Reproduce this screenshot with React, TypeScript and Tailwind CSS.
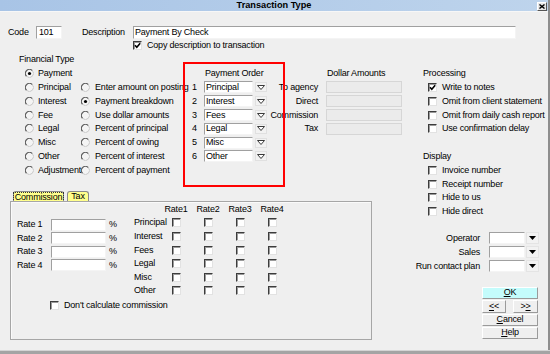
import React from "react";

const Row = ({ className = "", children }: { className?: string; children?: React.ReactNode }) => (
  <div className={"flex h-[13.8px] items-center whitespace-nowrap " + className}>{children}</div>
);

const Radio = ({ checked = false }: { checked?: boolean }) => (
  <svg width="9" height="9" viewBox="0 0 9 9" className="shrink-0">
    <circle cx="4.5" cy="4.5" r="4" fill="#f4f4f4" />
    <path d="M7.3 1.6 A4 4 0 0 0 1.6 7.3" stroke="#5e5e5e" strokeWidth="1.3" fill="none" />
    <path d="M1.6 7.3 A4 4 0 0 0 7.3 1.6" stroke="#c8c8c8" strokeWidth="1" fill="none" />
    {checked && <circle cx="4.5" cy="4.5" r="1.6" fill="#000" />}
  </svg>
);

const Check = ({ checked = false }: { checked?: boolean }) => (
  <div className="w-[9px] h-[9px] shrink-0 bg-white border border-t-[#3c3c3c] border-l-[#3c3c3c] border-b-[#e2e2e2] border-r-[#e2e2e2] shadow-[inset_1px_1px_0_#9a9a9a] flex items-center justify-center">
    {checked && (
      <svg width="7" height="7" viewBox="0 0 7 7">
        <path d="M1 3.2 L2.8 5.3 L6.2 1.2" stroke="#000" strokeWidth="1.6" fill="none" />
      </svg>
    )}
  </div>
);

const Field = ({ className = "", children }: { className?: string; children?: React.ReactNode }) => (
  <div className={"flex items-center bg-white border border-t-[#a0a0a0] border-l-[#a0a0a0] border-b-[#f4f4f4] border-r-[#f4f4f4] " + className}>
    {children}
  </div>
);

const HollowArrow = () => (
  <div className="w-[12px] h-[10px] ml-[2px] bg-[#f2f2f2] border border-[#e0e0e0] flex items-center justify-center">
    <svg width="8" height="5" viewBox="0 0 8 5">
      <path d="M0.5 0.5 H7.5 L4 4.5 Z" fill="#fff" stroke="#3a3a3a" strokeWidth="1" />
    </svg>
  </div>
);

const SolidArrow = () => (
  <div className="w-[13px] h-[12px] ml-[1px] bg-[#f2f2f2] border border-[#e4e4e4] flex items-center justify-center">
    <svg width="7" height="4" viewBox="0 0 7 4">
      <path d="M0 0 H7 L3.5 4 Z" fill="#000" />
    </svg>
  </div>
);

const Btn = ({ className = "", children }: { className?: string; children?: React.ReactNode }) => (
  <div className={"flex items-center justify-center border border-t-white border-l-white border-b-[#9a9a9a] border-r-[#9a9a9a] " + className}>
    {children}
  </div>
);

const finCol1 = ["Payment", "Principal", "Interest", "Fee", "Legal", "Misc", "Other", "Adjustment"];
const finCol2 = [
  "Enter amount on posting",
  "Payment breakdown",
  "Use dollar amounts",
  "Percent of principal",
  "Percent of owing",
  "Percent of interest",
  "Percent of payment",
];
const payOrder = ["Principal", "Interest", "Fees", "Legal", "Misc", "Other"];
const dollars = ["To agency", "Direct", "Commission", "Tax"];
const processing = [
  ["Write to notes", true],
  ["Omit from client statement", false],
  ["Omit from daily cash report", false],
  ["Use confirmation delay", false],
] as const;
const display = ["Invoice number", "Receipt number", "Hide to us", "Hide direct"];
const rateKinds = ["Principal", "Interest", "Fees", "Legal", "Misc", "Other"];

export default function App() {
  return (
    <div className="relative w-[550px] h-[354px] overflow-hidden bg-[#efefef] text-[9px] tracking-[-0.2px] leading-none text-black font-['Liberation_Sans',Arial,sans-serif] flex flex-col">
      <div className="flex flex-col flex-1 border-r-2 border-r-[#8e8e8e]">
        {/* title bar */}
        <div className="relative h-[12px] flex items-center justify-center bg-linear-to-r from-[#a8c4e6] to-[#bed4ec] border-b border-b-[#f7f7f7]">
          <span className="font-bold text-[9.2px] tracking-normal">Transaction Type</span>
          <div className="absolute right-[1px] top-[2px] w-[10px] h-[9px] bg-[#e8e8e8] border border-t-white border-l-white border-b-[#555] border-r-[#555] flex items-center justify-center">
            <svg width="6" height="5" viewBox="0 0 6 5">
              <path d="M0.5 0.5 L5.5 4.5 M5.5 0.5 L0.5 4.5" stroke="#000" strokeWidth="1.4" />
            </svg>
          </div>
        </div>

        {/* code / description */}
        <div className="flex h-[13px] items-center mt-[14px]">
          <span className="ml-[8px] w-[28px]">Code</span>
          <Field className="w-[26px] h-[13px] pl-[2px]">101</Field>
          <span className="ml-[20px] w-[51px]">Description</span>
          <Field className="w-[383px] h-[13px] pl-[1px]">Payment By Check</Field>
        </div>
        <div className="flex h-[13px] items-center pl-[133px]">
          <Check checked />
          <span className="ml-[5px]">Copy description to transaction</span>
        </div>

        <div className="flex mt-[1px]">
          {/* left part */}
          <div className="w-[410px] flex flex-col">
            <div className="flex">
              {/* financial type */}
              <div className="ml-[18px] w-[170px] flex flex-col">
                <Row className="pl-[1px]">Financial Type</Row>
                <div className="flex">
                  <div className="w-[64px] flex flex-col pl-[7px]">
                    {finCol1.map((t, i) => (
                      <Row key={t}>
                        <Radio checked={i === 0} />
                        <span className="ml-[4px]">{t}</span>
                      </Row>
                    ))}
                  </div>
                  <div className="flex flex-col">
                    <Row />
                    {finCol2.map((t, i) => (
                      <Row key={t}>
                        <Radio checked={i === 1} />
                        <span className="ml-[5px]">{t}</span>
                      </Row>
                    ))}
                  </div>
                </div>
              </div>

              {/* payment order */}
              <div className="w-[79px] flex flex-col">
                <Row />
                <Row className="pl-[17px]">Payment Order</Row>
                {payOrder.map((t, i) => (
                  <Row key={t}>
                    <span className="w-[16px] text-center pr-[3px]">{i + 1}</span>
                    <Field className="w-[49px] h-[12px] pl-[1px]">{t}</Field>
                    <HollowArrow />
                  </Row>
                ))}
              </div>

              {/* dollar amounts */}
              <div className="flex flex-col">
                <Row />
                <Row className="pl-[60px]">Dollar Amounts</Row>
                {dollars.map((t) => (
                  <Row key={t}>
                    <span className="w-[51px] text-right">{t}</span>
                    <div className="ml-[8px] w-[76px] h-[12px] bg-[#ebebeb] border border-[#d6d6d6]" />
                  </Row>
                ))}
              </div>
            </div>

            {/* tabs */}
            <div className="mt-[14px] ml-[13px] flex items-end h-[10px]">
              <div className="w-[51px] h-[10px] bg-[#ffff8c] border border-b-0 border-[#8a8a8a] rounded-t-[3px] flex items-center justify-center">
                <span className="px-[1px] border border-dotted border-[#333] leading-[8px]">Commission</span>
              </div>
              <div className="ml-[3px] w-[22px] h-[10px] bg-[#ffff8c] border border-b-0 border-[#8a8a8a] rounded-t-[3px] flex items-center justify-center">
                Tax
              </div>
            </div>
            <div className="ml-[10px] w-[362px] h-[139px] border border-[#a6a6a6] shadow-[inset_1px_1px_0_#fafafa] flex flex-col">
              <div className="flex">
                <div className="w-[123px] pl-[6px] pt-[16px] flex flex-col">
                  {[1, 2, 3, 4].map((n) => (
                    <div key={n} className="flex h-[13.5px] items-center">
                      <span className="w-[34px]">Rate {n}</span>
                      <Field className="w-[55px] h-[12px]" />
                      <span className="ml-[3px]">%</span>
                    </div>
                  ))}
                </div>
                <div className="flex flex-col">
                  <div className="flex h-[14px] items-center">
                    <span className="w-[26px]" />
                    {[1, 2, 3, 4].map((n) => (
                      <span key={n} className="w-[32px] text-center">Rate{n}</span>
                    ))}
                  </div>
                  {rateKinds.map((t) => (
                    <div key={t} className="flex h-[13.6px] items-center whitespace-nowrap">
                      <span className="w-[26px]">{t}</span>
                      {[1, 2, 3, 4].map((n) => (
                        <span key={n} className="w-[32px] flex justify-center">
                          <Check />
                        </span>
                      ))}
                    </div>
                  ))}
                </div>
              </div>
              <div className="flex h-[13px] items-center mt-[1px] pl-[39px]">
                <Check />
                <span className="ml-[5px]">Don't calculate commission</span>
              </div>
            </div>
          </div>

          {/* right part */}
          <div className="flex-1 flex flex-col">
            <div className="pl-[13px] flex flex-col">
              <Row />
              <Row>Processing</Row>
              {processing.map(([t, c]) => (
                <Row key={t} className="pl-[5px]">
                  <Check checked={c} />
                  <span className="ml-[5px]">{t}</span>
                </Row>
              ))}
              <Row />
              <Row>Display</Row>
              {display.map((t) => (
                <Row key={t} className="pl-[5px]">
                  <Check />
                  <span className="ml-[5px]">{t}</span>
                </Row>
              ))}
            </div>

            <div className="mt-[13px] flex flex-col items-end pr-[9px]">
              {["Operator", "Sales", "Run contact plan"].map((t) => (
                <Row key={t}>
                  <span className="mr-[9px]">{t}</span>
                  <Field className="w-[36px] h-[12px]" />
                  <SolidArrow />
                </Row>
              ))}
            </div>

            <div className="mt-[14px] flex flex-col items-end pr-[10px] gap-[1px]">
              <Btn className="w-[56px] h-[12px] bg-[#c4fcfc]">
                <span><u>O</u>K</span>
              </Btn>
              <div className="w-[56px] h-[13px] flex justify-between">
                <Btn className="w-[24px] h-[13px]">
                  <span><u>&lt;</u>&lt;</span>
                </Btn>
                <Btn className="w-[25px] h-[13px]">
                  <span>&gt;<u>&gt;</u></span>
                </Btn>
              </div>
              <Btn className="w-[56px] h-[12px]">
                <span><u>C</u>ancel</span>
              </Btn>
              <Btn className="w-[56px] h-[12px]">
                <span><u>H</u>elp</span>
              </Btn>
            </div>
          </div>
        </div>
      </div>
      <div className="h-[4px] bg-[#a4a4a4] border-t border-t-[#d4d4d4]" />

      {/* red highlight drawn over the payment order group */}
      <div className="absolute left-[183px] top-[62px] w-[102px] h-[125px] border-2 border-[#f00] pointer-events-none" />
    </div>
  );
}
